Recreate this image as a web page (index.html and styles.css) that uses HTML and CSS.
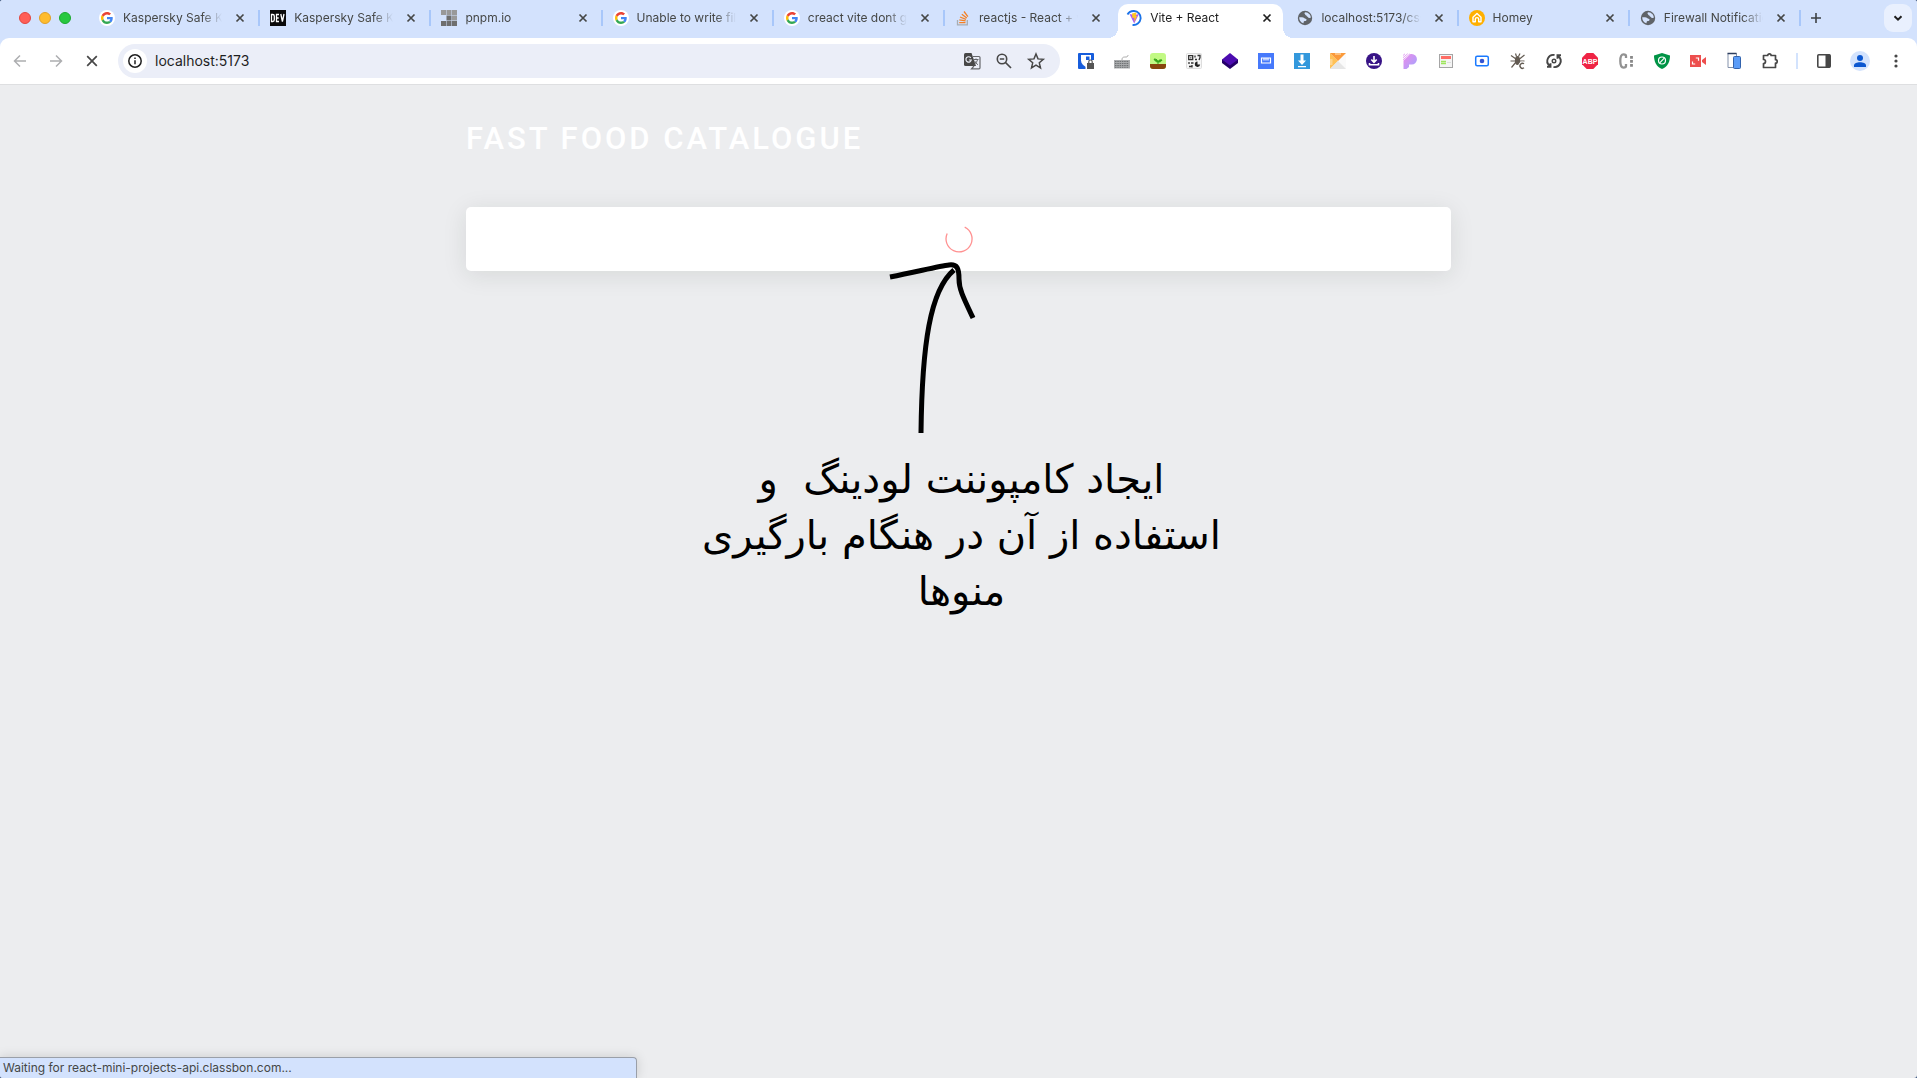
FILE: index.html
```html
<!DOCTYPE html>
<html lang="en">
<head>
<meta charset="utf-8">
<meta name="viewport" content="width=device-width, initial-scale=1">
<title>Vite + React</title>
<link rel="stylesheet" href="styles.css">
</head>
<body>
<svg class="sprite" aria-hidden="true">
  <symbol id="google" viewBox="0 0 16 16">
    <circle cx="8" cy="8" r="8" fill="#fff"/>
    <g transform="translate(2 2) scale(.25)">
      <path fill="#ea4335" d="M24 9.500c3.540 0 6.710 1.220 9.210 3.600l6.850-6.850C35.900 2.380 30.470 0 24 0 14.620 0 6.510 5.380 2.560 13.220l7.980 6.190C12.430 13.720 17.740 9.500 24 9.500z"/>
      <path fill="#4285f4" d="M46.980 24.550c0-1.570-.15-3.090-.38-4.550H24v9.020h12.940c-.58 2.960-2.260 5.480-4.780 7.180l7.730 6c4.510-4.180 7.090-10.360 7.090-17.650z"/>
      <path fill="#fbbc05" d="M10.530 28.590c-.48-1.450-.76-2.990-.76-4.590s.27-3.140.76-4.590l-7.980-6.190C.92 16.460 0 20.120 0 24c0 3.880.92 7.540 2.560 10.780l7.970-6.190z"/>
      <path fill="#34a853" d="M24 48c6.480 0 11.930-2.130 15.890-5.810l-7.730-6c-2.150 1.450-4.920 2.300-8.160 2.300-6.260 0-11.570-4.220-13.470-9.910l-7.980 6.190C6.510 42.620 14.620 48 24 48z"/>
    </g>
  </symbol>
  <symbol id="globe" viewBox="0 0 16 16">
    <circle cx="8" cy="8" r="7.200" fill="#5f6368"/>
    <path fill="#d3e2fd" d="M8.600 2.300c-1.400.2-1.400 1.700-.5 1.900 0 1.300 1.300.7 1.600 1.900.2.900 1.300.5 1.600 1.300.3.700 1.400.6 2.600.4-.1-2.800-2.300-5.200-5.300-5.500zM2.200 7.200c-.1 2.600 1.500 5.200 4.200 6.100.5-.6-.1-1.500.7-2.100.8-.3 2.400-.2 2.500-1.500-.2-1.300-1.800-1-2.400-1.800C6.200 7 4 7.400 2.200 7.200z"/>
  </symbol>
  <symbol id="close" viewBox="0 0 16 16">
    <path d="M4.500 4.500l7 7M11.500 4.500l-7 7" fill="none" stroke="currentColor" stroke-width="1.700"/>
  </symbol>
</svg>

<div class="window">
  <header class="browser">
    <div class="tabstrip">
      <div class="lights">
        <button class="light light-close" aria-label="Close window"></button>
        <button class="light light-min" aria-label="Minimize window"></button>
        <button class="light light-max" aria-label="Zoom window"></button>
      </div>
      <nav class="tabs" aria-label="Tabs">
        <div class="tab">
          <svg class="favicon"><use href="#google"/></svg>
          <a class="title" href="#">Kaspersky Safe Ki</a>
          <button class="close" aria-label="Close tab"><svg><use href="#close"/></svg></button>
        </div>
        <div class="tab">
          <svg class="favicon" viewBox="0 0 16 16"><rect width="16" height="16" fill="#0a0a0a"/><path d="M1.500 4.500v7h1.200q1.600 0 1.600-1.800V6.300q0-1.800-1.600-1.800zM9 4.500H6.500v7H9M6.500 8H8.700M10.800 4l1.600 7.500L14 4" fill="none" stroke="#fff" stroke-width="1.300"/></svg>
          <a class="title" href="#">Kaspersky Safe Ki</a>
          <button class="close" aria-label="Close tab"><svg><use href="#close"/></svg></button>
        </div>
        <div class="tab">
          <svg class="favicon" viewBox="0 0 16 16"><path fill="#999" d="M0 0h5v5H0zM5.500 0h5v5h-5zM11 0h5v5h-5zM11 5.500h5v5h-5z"/><path fill="#6e6e6e" d="M5.500 5.500h5v5h-5zM0 11h5v5H0zM5.500 11h5v5h-5zM11 11h5v5h-5z"/></svg>
          <a class="title" href="#">pnpm.io</a>
          <button class="close" aria-label="Close tab"><svg><use href="#close"/></svg></button>
        </div>
        <div class="tab">
          <svg class="favicon"><use href="#google"/></svg>
          <a class="title" href="#">Unable to write fil</a>
          <button class="close" aria-label="Close tab"><svg><use href="#close"/></svg></button>
        </div>
        <div class="tab">
          <svg class="favicon"><use href="#google"/></svg>
          <a class="title" href="#">creact vite dont g</a>
          <button class="close" aria-label="Close tab"><svg><use href="#close"/></svg></button>
        </div>
        <div class="tab tab-plain">
          <svg class="favicon" viewBox="0 0 16 16"><path d="M2.500 10v4.800h9.800V10" fill="none" stroke="#a8adb3" stroke-width="1.300"/><path d="M4.200 12.600h6.300M4.300 9.800l6.300 1M5 7l6 2.400M6.800 4.200l5 3.900M9 1.500l3.900 5.100" fill="none" stroke="#f48024" stroke-width="1.300"/></svg>
          <a class="title" href="#">reactjs - React + v</a>
          <button class="close" aria-label="Close tab"><svg><use href="#close"/></svg></button>
        </div>
        <div class="tab tab-active">
          <svg class="favicon" viewBox="0 0 16 16"><path d="M1.500 4.500A7 7 0 0 1 8 1a7 7 0 1 1-1.500 13.900" fill="none" stroke="#1a73e8" stroke-width="1.900"/><path d="M3.500 4l4.700 9.500L13 4 8.500 5z" fill="#a95bf5"/><path d="M6 3.500l4.500-.9L9.800 6l1.400-.2-3 6.200.2-4.200-2 .3z" fill="#ffc61f"/></svg>
          <a class="title" href="#" aria-current="page">Vite + React</a>
          <button class="close" aria-label="Close tab"><svg><use href="#close"/></svg></button>
        </div>
        <div class="tab">
          <svg class="favicon"><use href="#globe"/></svg>
          <a class="title" href="#">localhost:5173/css</a>
          <button class="close" aria-label="Close tab"><svg><use href="#close"/></svg></button>
        </div>
        <div class="tab">
          <svg class="favicon" viewBox="0 0 16 16"><circle cx="8" cy="8" r="8" fill="#ffb000"/><path d="M4 11.800V7.200l4-3.700 4 3.700v4.600H9.700V9.300a1.700 1.700 0 0 0-3.400 0v2.500z" fill="none" stroke="#fff" stroke-width="1.400" stroke-linejoin="round"/></svg>
          <a class="title" href="#">Homey</a>
          <button class="close" aria-label="Close tab"><svg><use href="#close"/></svg></button>
        </div>
        <div class="tab">
          <svg class="favicon"><use href="#globe"/></svg>
          <a class="title" href="#">Firewall Notificatio</a>
          <button class="close" aria-label="Close tab"><svg><use href="#close"/></svg></button>
        </div>
      </nav>
      <div class="strip-end">
        <button class="new-tab" aria-label="New tab"><svg viewBox="0 0 16 16"><path d="M8 3v10M3 8h10" stroke="#3c4043" stroke-width="1.600"/></svg></button>
        <button class="tab-search" aria-label="Search tabs"><svg viewBox="0 0 16 16"><path d="M4.500 6.200L8 9.700l3.500-3.500" fill="none" stroke="#1f1f1f" stroke-width="2"/></svg></button>
      </div>
    </div>

    <div class="toolbar">
      <button class="tool" aria-label="Back"><svg viewBox="0 0 20 20"><path d="M16 10H4.800M10 4.500L4.500 10l5.500 5.500" fill="none" stroke="#adaeb0" stroke-width="1.500"/></svg></button>
      <button class="tool" aria-label="Forward"><svg viewBox="0 0 20 20"><path d="M4 10h11.200M10 4.500l5.500 5.500-5.500 5.500" fill="none" stroke="#adaeb0" stroke-width="1.500"/></svg></button>
      <button class="tool" aria-label="Stop loading"><svg viewBox="0 0 20 20"><path d="M5.200 5.200l9.600 9.600M14.800 5.200l-9.600 9.600" stroke="#474747" stroke-width="1.700"/></svg></button>
      <div class="omnibox">
        <button class="site-info" aria-label="View site information"><svg viewBox="0 0 16 16"><circle cx="8" cy="8" r="6.200" fill="none" stroke="#1f1f1f" stroke-width="1.500"/><path d="M8 7.200v4M8 4.600v1.500" stroke="#1f1f1f" stroke-width="1.500"/></svg></button>
        <input class="address" type="text" value="localhost:5173" aria-label="Address">
        <div class="box-actions">
          <button class="tool" aria-label="Translate this page"><svg viewBox="0 0 20 20"><path d="M3.500 2h6l4.500 13H3.500A1.500 1.500 0 0 1 2 13.500v-10A1.500 1.500 0 0 1 3.500 2z" fill="#474747"/><path d="M8.800 6.800A2.700 2.700 0 1 0 9.300 9H6.900" fill="none" stroke="#ebeef8" stroke-width="1.200"/><path d="M11 5.500h6a1 1 0 0 1 1 1v10.300a1 1 0 0 1-1 1H9.500L12 15" fill="none" stroke="#66686c" stroke-width="1.200"/><path d="M11.500 8.500h5M14 7.500v1M15.500 8.500c-.3 2-1.500 3.500-3 4.700M12.500 9.800c.8 1.700 2 2.800 3.500 4" fill="none" stroke="#66686c"/></svg></button>
          <button class="tool" aria-label="Zoom"><svg viewBox="0 0 20 20"><circle cx="8" cy="8" r="4.700" fill="none" stroke="#474747" stroke-width="1.600"/><path d="M11.500 11.500l5.500 5.500M5.800 8h4.400" stroke="#474747" stroke-width="1.700"/></svg></button>
          <button class="tool" aria-label="Bookmark this tab"><svg viewBox="0 0 20 20"><path d="M10 3l2 4.900 5.300.4-4 3.500 1.200 5.100-4.500-2.700-4.500 2.700 1.200-5.100-4-3.500L8 7.900z" fill="none" stroke="#474747" stroke-width="1.500"/></svg></button>
        </div>
      </div>

      <button class="tool" aria-label="Password manager"><svg viewBox="0 0 20 20"><rect x="2" y="2" width="16" height="16" rx="1" fill="#175ddc"/><path d="M5 4h10v5.500c0 3-2.200 5-5 6.500-2.800-1.500-5-3.500-5-6.500z" fill="#fff"/><path d="M10 5.500h3.500v4c0 2-1.500 3.500-3.500 4.700z" fill="#175ddc"/><path d="M9.500 9H18v9H9.500z" fill="#fff"/><path d="M11 12h7v6h-7z" fill="#555"/><path d="M12.800 12v-1.300a1.700 1.700 0 0 1 3.400 0V12" fill="none" stroke="#555" stroke-width="1.200"/></svg></button>
      <button class="tool" aria-label="Keyboard"><svg viewBox="0 0 20 20"><rect x="2" y="9" width="16" height="8.500" fill="#a9abad"/><path d="M3 10.500h14M3 12.500h14M3 14.500h14M3 16.300h14" stroke="#6f7274" stroke-dasharray="1.500 .8"/><path d="M10 9c0-3 1.500-3 4-3 1.500 0 2-1 2-2" fill="none" stroke="#aaa"/></svg></button>
      <button class="tool" aria-label="Garden"><svg viewBox="0 0 20 20"><rect x="2" y="2" width="16" height="16" rx="3" fill="#c2f984"/><path d="M2 13h16v2a3 3 0 0 1-3 3H5a3 3 0 0 1-3-3z" fill="#87450d"/><path d="M10 13v-2.500M10 11C8 11 7 10 6 8c2.500 0 4 1 4 3zM10 11c.5-1.700 1.500-2.500 4-2-.7 1.500-2 2.300-4 2z" fill="#36a318" stroke="#36a318"/></svg></button>
      <button class="tool" aria-label="QR code"><svg viewBox="0 0 20 20"><rect x="2.500" y="2.500" width="15" height="15" rx="1" fill="#f6f6f6" stroke="#ddd"/><path d="M4.700 4.700h4v4h-4zM11 4.500v2M11 8.500h2M13.500 4.500h2.500v2l-1 2.500M5 11v2M7 12h2.500M5 15.500h2.500M8 14v2.500" fill="none" stroke="#333" stroke-width="1.300"/><path d="M13.500 10.500v3h2.700a2.700 2.700 0 1 1-2.700-3z" fill="#222"/><path d="M6.200 6.200h1.200v1.200H6.200z" fill="#333"/></svg></button>
      <button class="tool" aria-label="Layers"><svg viewBox="0 0 20 20"><path d="M2 8l8 5 8-5v4l-8 6-8-6z" fill="#250069"/><path d="M10 2l8 6.500-8 6-8-6z" fill="#4c0bb0"/></svg></button>
      <button class="tool" aria-label="Ruler"><svg viewBox="0 0 20 20"><rect x="2" y="2" width="16" height="16" fill="#4679fb"/><path d="M5.500 7h9v5h-9zM8 7v2.500M10 7v2.500M12 7v2.500" fill="none" stroke="#fff" stroke-width="1.200"/></svg></button>
      <button class="tool" aria-label="Downloader"><svg viewBox="0 0 20 20"><rect x="2" y="2" width="16" height="16" fill="#3398dc"/><path d="M8.500 3.500h3v6H14l-4 4.500-4-4.500h2.500zM6 15h8v1.200H6z" fill="#fff"/></svg></button>
      <button class="tool" aria-label="Notes"><svg viewBox="0 0 20 20"><rect x="2" y="2" width="16" height="16" rx="1" fill="#fafafa"/><path d="M2 2v16l8-8z" fill="#ffc157"/><path d="M2 2l8 8 8-8z" fill="#fb9a3a"/><path d="M2 18l8-8 8 8z" fill="#e6e6e6"/><path d="M8 2v2M10 2v2M12 2v2M2 9h2.500M2 11h2.500M2 13h2.500" stroke="#ffe9c8"/></svg></button>
      <button class="tool" aria-label="Save file"><svg viewBox="0 0 20 20"><circle cx="10" cy="10" r="8" fill="#381386"/><path d="M10 5v6M7.300 8.500L10 11.300l2.700-2.800M5.500 12v1.800h9V12" fill="none" stroke="#fff" stroke-width="1.600"/></svg></button>
      <button class="tool" aria-label="Color picker"><svg viewBox="0 0 20 20"><defs><linearGradient id="pg" x1="0" y1="0" x2="1" y2="1"><stop stop-color="#ef8bea"/><stop offset="1" stop-color="#9fa5ff"/></linearGradient></defs><path d="M3.500 9.500L10.500 3h1.200a5 5 0 0 1 0 10.500H9V16l-2.500 2h-3z" fill="url(#pg)"/><path d="M3 4.500L5 2.800M3 6.700l4.700-4M3 8.800L10 2.800" stroke="#e3a4f3"/></svg></button>
      <button class="tool" aria-label="Reader"><svg viewBox="0 0 20 20"><rect x="3.500" y="3.500" width="13" height="13" fill="#f4f4f4" stroke="#a5a5a5"/><path d="M5 5h10v3H5z" fill="#ff6d65"/><path d="M5 10.500h5M5 12.500h5" stroke="#9de55b" stroke-width="1.300"/><path d="M11 11.500h4" stroke="#ddd"/></svg></button>
      <button class="tool" aria-label="Capture"><svg viewBox="0 0 20 20"><rect x="3.700" y="5.200" width="12.600" height="9.600" rx="1.500" fill="#fff" stroke="#1979ff" stroke-width="1.500"/><circle cx="10" cy="10" r="2.300" fill="#3454d1"/></svg></button>
      <button class="tool" aria-label="Debugger"><svg viewBox="0 0 20 20"><ellipse cx="9.500" cy="9.500" rx="2.600" ry="4.500" fill="#635b52"/><path d="M7.500 2.500l1 3M12 2.500l-1.500 3M3 4.500l5 3.500M16.500 4l-5 4M2.500 10h14M3.500 16.500L8 11" fill="none" stroke="#635b52" stroke-width="1.200"/><path d="M16 12.800a2.500 2.500 0 1 0 0 4" fill="none" stroke="#fff" stroke-width="3"/><path d="M16 12.800a2.500 2.500 0 1 0 0 4" fill="none" stroke="#635b52" stroke-width="1.400"/></svg></button>
      <button class="tool" aria-label="Refresh"><svg viewBox="0 0 20 20"><circle cx="10" cy="10" r="1.800" fill="none" stroke="#454545" stroke-width="1.400"/><path d="M10.500 4A6 6 0 0 0 5.500 14.500M9.500 16a6 6 0 0 0 5-10.500M3 15.800h3.500v-3.500M17 4.200h-3.500v3.500" fill="none" stroke="#454545" stroke-width="1.900"/></svg></button>
      <button class="tool" aria-label="Ad blocker"><svg class="abp" viewBox="0 0 20 20"><path d="M6.700 2h6.600L18 6.700v6.600L13.300 18H6.700L2 13.300V6.700z" fill="#ef2445"/><text x="10" y="12.500" text-anchor="middle">ABP</text></svg></button>
      <button class="tool" aria-label="Cookies"><svg viewBox="0 0 20 20"><path d="M10 7V5q0-1.600-2.500-1.600Q4.300 3.400 4.300 10t3.200 6.600Q10 16.600 10 15v-2" fill="none" stroke="#929292" stroke-width="2.300"/><path d="M15.500 5v11" stroke="#888" stroke-width="2.800" stroke-dasharray="2.800 1.200"/></svg></button>
      <button class="tool" aria-label="Shield"><svg viewBox="0 0 20 20"><path d="M10 2l8 2.500c0 6-2 11-8 13.500-6-2.500-8-7.500-8-13.500z" fill="#009446"/><circle cx="10" cy="9.500" r="3.500" fill="none" stroke="#fff" stroke-width="1.200"/><path d="M12.300 7.200l-4.600 4.600" stroke="#fff" stroke-width="1.200"/></svg></button>
      <button class="tool" aria-label="Screen recorder"><svg viewBox="0 0 20 20"><path d="M2 4h11v12H2zM14 9l4-3v8l-4-3z" fill="#ed4f4e"/><path d="M7.800 7h2.700v2.700M4.500 10.500V13h2.700" fill="none" stroke="#fff" stroke-width="1.200"/></svg></button>
      <button class="tool" aria-label="Responsive viewer"><svg viewBox="0 0 20 20"><path d="M4 2.500h8.500v14H4z" fill="#fff" stroke="#8492ab"/><path d="M3.500 2.500h9" stroke="#2d3e5e" stroke-width="1.500"/><rect x="9.500" y="5.500" width="7" height="12" rx="1" fill="#5a9cf8" stroke="#3263ad"/></svg></button>
      <button class="tool" aria-label="Extensions"><svg viewBox="0 0 20 20"><path d="M3.500 4.500h4.200a1.700 1.700 0 0 1 3.400 0h4.400v4.200a1.700 1.700 0 0 1 0 3.400v4.400h-12v-4a2 2 0 0 0 0-4z" fill="none" stroke="#474747" stroke-width="1.700" stroke-linejoin="round"/></svg></button>
      <span class="divider"></span>
      <button class="tool" aria-label="Side panel"><svg viewBox="0 0 20 20"><rect x="3.800" y="3.800" width="12.400" height="12.400" rx="1" fill="none" stroke="#474747" stroke-width="1.600"/><path d="M11.500 3.500H16v13h-4.500z" fill="#474747"/></svg></button>
      <button class="tool" aria-label="Profile"><svg viewBox="0 0 20 20"><circle cx="10" cy="10" r="10" fill="#d3e3fd"/><circle cx="10" cy="7" r="3" fill="#0b57d0"/><path d="M4 16v-1.500c0-2.200 3-3.300 6-3.300s6 1.100 6 3.300V16z" fill="#0b57d0"/></svg></button>
      <button class="tool" aria-label="Browser menu"><svg viewBox="0 0 20 20" fill="#474747"><circle cx="10" cy="5" r="1.600"/><circle cx="10" cy="10" r="1.600"/><circle cx="10" cy="15" r="1.600"/></svg></button>
    </div>
  </header>

  <main class="page">
    <div class="container">
      <h1 class="heading">FAST FOOD CATALOGUE</h1>
      <section class="card" aria-label="Loading">
        <svg class="spinner" viewBox="0 0 28 28"><path d="M19.700 2.200A13 13 0 1 1 2.200 8.500" fill="none" stroke="#ff9191" stroke-width="1.300"/></svg>
      </section>
    </div>
    <figure class="note">
      <svg class="arrow" viewBox="879 260 160 176"><path d="M890 277C920 271 940 266 949 265C957 264 959 268 959 279C959 289 963 297 973 318M954 270C930 290 922 345 921 433" fill="none" stroke="#000" stroke-width="5"/></svg>
      <figcaption class="note-text" lang="fa" dir="rtl">ایجاد کامپوننت لودینگ&nbsp; و<br>استفاده از آن در هنگام بارگیری<br>منوها</figcaption>
    </figure>
  </main>
  <footer class="status" role="status">Waiting for react-mini-projects-api.classbon.com...</footer>
</div>
</body>
</html>
```
FILE: styles.css
```css
* {
  box-sizing: border-box;
}

body {
  margin: 0;
  background: #3a5580;
  font-family: Roboto, "Liberation Sans", sans-serif;
}

button {
  display: flex;
  align-items: center;
  justify-content: center;
  padding: 0;
  border: 0;
  background: none;
}

.sprite {
  display: none;
}

.window {
  display: flex;
  flex-direction: column;
  min-height: 100vh;
  overflow: hidden;
  border-radius: 3px;
  background: #ecedef;
}

.browser {
  background: #d3e2fd;
}

/* Tab strip */
.tabstrip {
  display: flex;
  height: 38px;
}

.lights {
  display: flex;
  flex: none;
  gap: 8px;
  width: 89px;
  padding: 12px 0 0 19px;
}

.light {
  width: 12px;
  height: 12px;
  border: 1px solid #e2463f;
  border-radius: 50%;
  background: #ff5f57;
}

.light-min {
  border-color: #e0a028;
  background: #febc2e;
}

.light-max {
  border-color: #1ca92e;
  background: #28c840;
}

.tabs {
  display: grid;
  flex: 1;
  grid-auto-columns: minmax(0, 1fr);
  grid-auto-flow: column;
  align-items: start;
  min-width: 0;
}

.tab {
  display: flex;
  align-items: center;
  height: 16px;
  margin-top: 10px;
  padding: 0 10px;
  border-right: 2px solid #a8c7fa;
  color: #454746;
}

.tab-plain {
  border-color: transparent;
}

.tab-active {
  position: relative;
  height: 34px;
  margin: 4px 4px 0 2px;
  padding: 0 8px 6px 8px;
  border: 0;
  border-radius: 10px 10px 0 0;
  background: #fff;
  color: #1f1f1f;
}

.tab-active::before,
.tab-active::after {
  position: absolute;
  bottom: 0;
  width: 10px;
  height: 10px;
  content: "";
}

.tab-active::before {
  right: 100%;
  background: radial-gradient(circle at 0 0, transparent 10px, #fff 10px);
}

.tab-active::after {
  left: 100%;
  background: radial-gradient(circle at 100% 0, transparent 10px, #fff 10px);
}

.favicon {
  flex: none;
  width: 16px;
  height: 16px;
}

.title {
  flex: 1;
  min-width: 0;
  margin: 0 10px 0 8px;
  overflow: hidden;
  color: inherit;
  font-family: Inter, "Liberation Sans", sans-serif;
  font-size: 12px;
  line-height: 16px;
  text-decoration: none;
  white-space: nowrap;
  -webkit-mask-image: linear-gradient(to left, transparent, #000 20px);
  mask-image: linear-gradient(to left, transparent, #000 20px);
}

.close,
.close svg {
  flex: none;
  width: 16px;
  height: 16px;
  color: inherit;
}

.strip-end {
  display: flex;
  flex: none;
  justify-content: space-between;
  width: 116px;
  padding: 4px 5px 6px 7px;
}

.new-tab,
.new-tab svg,
.tab-search svg {
  width: 16px;
}

.tab-search {
  width: 28px;
  border-radius: 9px;
  background: #e9f0fe;
}

/* Toolbar */
.toolbar {
  display: flex;
  align-items: center;
  gap: 16px;
  height: 47px;
  padding: 0 11px 0 10px;
  border-bottom: 1px solid #dedfe1;
  border-radius: 9px 9px 0 0;
  background: #fff;
}

.tool,
.tool svg {
  flex: none;
  width: 20px;
  height: 20px;
}

.abp text {
  fill: #fff;
  font-size: 7px;
  font-weight: 700;
}

.omnibox {
  display: flex;
  flex: 1;
  align-items: center;
  gap: 8px;
  min-width: 0;
  height: 34px;
  padding: 0 14px 0 5px;
  border-radius: 17px;
  background: #ebeef8;
}

.site-info {
  flex: none;
  width: 24px;
  height: 24px;
  border-radius: 50%;
  background: #fff;
}

.site-info svg {
  width: 16px;
}

.address {
  flex: 1;
  min-width: 0;
  padding: 0;
  border: 0;
  outline: 0;
  background: none;
  color: #1f1f1f;
  font: 14px/20px Inter, "Liberation Sans", sans-serif;
}

.box-actions {
  display: flex;
  gap: 12px;
}

.divider {
  flex: none;
  width: 2px;
  height: 16px;
  background: #d3e3fd;
}

/* Page */
.page {
  flex: 1;
}

.container {
  width: 100%;
  max-width: 985px;
  margin: 0 auto;
  padding-top: 34px;
}

.heading {
  margin: 0 0 48px;
  color: #fff;
  font-size: 31px;
  font-weight: 500;
  letter-spacing: 3px;
  line-height: 40px;
}

.card {
  display: flex;
  align-items: center;
  justify-content: center;
  padding: 18px;
  border-radius: 5px;
  background: #fff;
  box-shadow: 0 4px 24px rgba(30, 40, 30, 0.1);
}

.spinner {
  width: 28px;
  height: 28px;
}

.note {
  display: flex;
  position: relative;
  flex-direction: column;
  align-items: center;
  margin: -11px 0 0;
}

.arrow {
  width: 160px;
  height: 176px;
}

.note-text {
  margin-top: 15px;
  padding-left: 6px;
  color: #000;
  font-family: "DejaVu Sans", sans-serif;
  font-size: 40px;
  line-height: 56px;
  text-align: center;
}

.status {
  width: 637px;
  max-width: 100%;
  padding: 2px 3px;
  border: 1px solid #9a9fa8;
  border-width: 1px 1px 0 0;
  border-radius: 0 4px 0 0;
  background: #d3e2fd;
  box-shadow: 0 0 12px rgba(0, 0, 0, 0.15);
  color: #454746;
  font-family: Inter, "Liberation Sans", sans-serif;
  font-size: 12px;
  line-height: 16px;
}
```
